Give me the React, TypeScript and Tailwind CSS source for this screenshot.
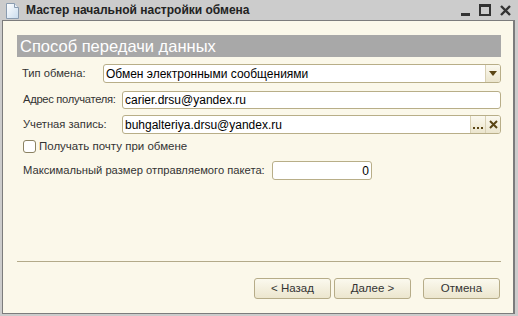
import React from 'react';

const font = { fontFamily: '"Liberation Sans", Arial, sans-serif' };

const DocIcon = () => (
  <svg width="13" height="16" viewBox="0 0 13 16">
    <defs>
      <linearGradient id="pg" x1="0" y1="0" x2="1" y2="1">
        <stop offset="0" stopColor="#ffffff" />
        <stop offset="1" stopColor="#c9dcee" />
      </linearGradient>
    </defs>
    <path d="M0.5 0.5 H8.5 L12.5 4.5 V15.5 H0.5 Z" fill="url(#pg)" stroke="#8a9cb0" />
    <path d="M8.5 0.5 V4.5 H12.5" fill="#e8eef5" stroke="#8a9cb0" />
  </svg>
);

const WinButtons = () => (
  <div className="flex items-center gap-[9px] pr-[7px]">
    <div className="w-[9px] h-[3px] bg-[#333] mt-[9px]" />
    <div className="w-[12px] h-[12px] border-[2px] border-[#333] border-t-[3px]" />
    <svg width="11" height="11" viewBox="0 0 11 11">
      <path d="M1 1 L10 10 M10 1 L1 10" stroke="#333" strokeWidth="2.4" />
    </svg>
  </div>
);

const SideBtn: React.FC<{ children: React.ReactNode }> = ({ children }) => (
  <div className="w-[15px] h-full flex items-center justify-center border-l border-[#d8d0b4] bg-gradient-to-b from-[#fbf9ef] to-[#ebe5cd]">
    {children}
  </div>
);

const Label: React.FC<{ children: React.ReactNode; w: string }> = ({ children, w }) => (
  <div className={`${w} shrink-0 whitespace-nowrap text-[11.2px] text-[#333] leading-none`}>{children}</div>
);

const Btn: React.FC<{ children: React.ReactNode }> = ({ children }) => (
  <button className="w-[77px] h-[21px] rounded-[3px] border border-[#b6ac88] bg-gradient-to-b from-[#fbf9ee] to-[#ece6ce] text-[11.5px] text-[#333] flex items-center justify-center leading-none">
    {children}
  </button>
);

export default function App() {
  return (
    <div className="w-[518px] h-[316px] bg-[#cccccc] flex flex-col overflow-hidden" style={font}>
      {/* Title bar */}
      <div className="h-[20px] flex items-center justify-between">
        <div className="flex items-center">
          <div className="ml-[6px] mt-[1px]">
            <DocIcon />
          </div>
          <span className="ml-[7px] text-[12px] font-bold text-[#222] leading-none">Мастер начальной настройки обмена</span>
        </div>
        <WinButtons />
      </div>

      {/* Window body */}
      <div className="h-[294px] ml-[2px] mr-[3px] border border-[#7c7c7c] border-r-2 bg-[#fbf8ea] flex flex-col pt-[14px] pl-[14px] pr-[12px]">
        <div className="h-[22px] bg-[#a8a8a8] flex items-center pl-[3px]">
          <span className="text-[16.5px] text-white leading-none">Способ передачи данных</span>
        </div>

        <div className="flex flex-col pl-[5px]">
          <div className="flex items-center mt-[7px] h-[19px]">
            <Label w="w-[81px]">Тип обмена:</Label>
            <div className="flex-1 h-[19px] flex border border-[#b8ae88] rounded-[3px] bg-white overflow-hidden">
              <div className="flex-1 flex items-center pl-[2px] text-[12px] text-black leading-none whitespace-nowrap">
                Обмен электронными сообщениями
              </div>
              <SideBtn>
                <svg width="8" height="5" viewBox="0 0 8 5">
                  <path d="M0 0 H8 L4 5 Z" fill="#5a4514" />
                </svg>
              </SideBtn>
            </div>
          </div>

          <div className="flex items-center mt-[8px] h-[18px] pl-[1px]">
            <Label w="w-[99px] tracking-[-0.3px]">Адрес получателя:</Label>
            <div className="flex-1 h-[18px] flex items-center border border-[#b8ae88] rounded-[3px] bg-white pl-[2px] text-[12px] text-black leading-none">
              carier.drsu@yandex.ru
            </div>
          </div>

          <div className="flex items-center mt-[6px] h-[19px] pl-[1px]">
            <Label w="w-[99px]">Учетная запись:</Label>
            <div className="flex-1 h-[19px] flex border border-[#b8ae88] rounded-[3px] bg-white overflow-hidden">
              <div className="flex-1 flex items-center pl-[2px] text-[12px] text-black leading-none">
                buhgalteriya.drsu@yandex.ru
              </div>
              <SideBtn>
                <svg width="11" height="3" viewBox="0 0 11 3" className="mt-[8px]">
                  <rect x="0" y="0" width="2" height="2" fill="#5a4514" />
                  <rect x="4" y="0" width="2" height="2" fill="#5a4514" />
                  <rect x="8" y="0" width="2" height="2" fill="#5a4514" />
                </svg>
              </SideBtn>
              <SideBtn>
                <svg width="9" height="9" viewBox="0 0 9 9">
                  <path d="M1 1 L8 8 M8 1 L1 8" stroke="#5a4514" strokeWidth="2" />
                </svg>
              </SideBtn>
            </div>
          </div>

          <div className="flex items-center mt-[6px] h-[13px] pl-[1px]">
            <div className="w-[13px] h-[13px] rounded-[3px] border border-[#8b8262] bg-white" />
            <span className="ml-[3px] text-[11.5px] text-[#333] leading-none whitespace-nowrap">Получать почту при обмене</span>
          </div>

          <div className="flex items-center mt-[8px] h-[19px] pl-[1px]">
            <Label w="w-[249px]">Максимальный размер отправляемого пакета:</Label>
            <div className="w-[100px] h-[19px] flex items-center justify-end border border-[#b8ae88] rounded-[3px] bg-white pr-[2px] text-[12px] text-black leading-none">
              0
            </div>
          </div>
        </div>

        <div className="flex-1" />
        <div className="h-px bg-[#b3aa8a]" />

        <div className="flex justify-end items-center mt-[16px] mb-[14px] pr-[1px]">
          <Btn>&lt; Назад</Btn>
          <div className="ml-[3px]">
            <Btn>Далее &gt;</Btn>
          </div>
          <div className="ml-[12px]">
            <Btn>Отмена</Btn>
          </div>
        </div>
      </div>
    </div>
  );
}
